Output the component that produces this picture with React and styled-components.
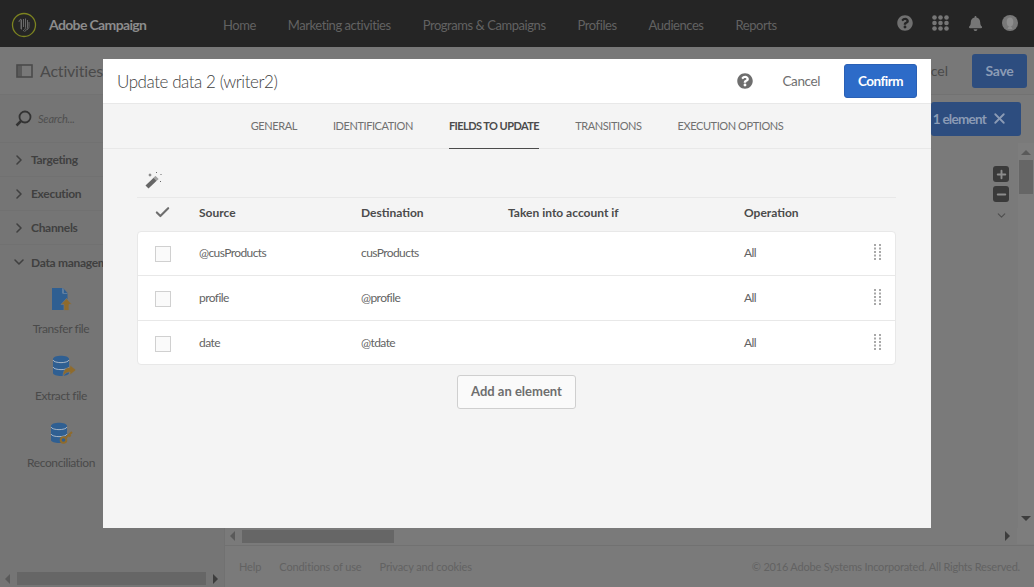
import React from 'react';
import styled, { createGlobalStyle } from 'styled-components';
import { ChevronRight, ChevronDown, Check, X, Plus, Minus } from 'lucide-react';
import { FaQuestionCircle, FaBell } from 'react-icons/fa';

const Global = createGlobalStyle`
  html, body { margin: 0; padding: 0; height: 100%; overflow: hidden; }
  body { font-family: Lato, "Open Sans", "Liberation Sans", sans-serif; background: #7a7a7a; }
  * { box-sizing: border-box; }
`;

const Page = styled.div`
  position: relative; width: 1034px; height: 587px; overflow: hidden;
  display: flex; flex-direction: column; background: #7a7a7a;
`;
const TopBar = styled.header`
  height: 47px; background: #252525; display: flex; align-items: center; padding: 2px 0 0 11px; flex: none;
`;
const Brand = styled.div`
  width: 212px; display: flex; align-items: center; gap: 12px; color: #8c8c8c; font-size: 14px; font-weight: 700; letter-spacing: -.65px;
`;
const Nav = styled.nav`
  display: flex; flex: 1; gap: 32px; color: #626262; font-size: 13px;
`;
const NavItem = styled.span`letter-spacing: -.45px;`;
const TopIcons = styled.div`
  display: flex; align-items: center; gap: 19px; color: #767676; padding-right: 16px; margin-top: -3px;
`;
const SubBar = styled.div`
  height: 48px; flex: none; display: flex; align-items: center; padding: 0 7px 0 16px; gap: 8px; background: #787878; border-bottom: 1px solid #727272;
`;
const SubTitle = styled.div`
  flex: 1; color: #4a4a4a; font-size: 16px; display: flex; align-items: center; gap: 7px; letter-spacing: -.2px;
`;
const SubCancel = styled.span`color: #4a4a4a; font-size: 14px; margin-right: 16px;`;
const SaveButton = styled.div`
  width: 55px; height: 34px; border-radius: 3px; background: #2d4d7f; color: #8b9bb5; font-size: 14px; font-weight: 700;
  display: flex; align-items: center; justify-content: center; letter-spacing: -.3px;
`;
const Main = styled.div`flex: 1; display: flex; min-height: 0;`;
const Sidebar = styled.aside`
  width: 225px; flex: none; background: #757575; display: flex; flex-direction: column; border-right: 1px solid #717171; overflow: hidden;
`;
const SearchRow = styled.div`
  height: 48px; display: flex; align-items: center; gap: 6px; padding-left: 15px; color: #4f4f4f; font-size: 11px; font-style: italic; border-bottom: 1px solid #717171; flex: none; letter-spacing: -.2px;
`;
const Group = styled.div`
  height: 34px; flex: none; display: flex; align-items: center; gap: 4px; padding-left: 11px; color: #404040; font-size: 12px; font-weight: 700; white-space: nowrap; letter-spacing: -.3px;
  border-bottom: ${p => (p.$open ? 'none' : '1px solid #717171')};
`;
const Tool = styled.div`
  height: 67px; flex: none; width: 122px; display: flex; flex-direction: column; align-items: center; gap: 10px; color: #4a4a4a; font-size: 12px; padding-top: 8px; letter-spacing: -.4px;
`;
const ToolIcon = styled.div`
  height: 24px; display: flex; align-items: center; justify-content: center; flex: none; margin-left: ${p => p.$dx || 0}px;
`;
const SideSpacer = styled.div`flex: 1;`;
const HScroll = styled.div`
  height: 13px; margin: 0 0 2px; display: flex; align-items: center; flex: none; padding-left: 5px; gap: 7px;
`;
const ScrollThumb = styled.div`
  height: 13px; width: ${p => p.$w}px; background: #666; flex: none;
`;
const ArrowLeft = styled.div`width:0;height:0;border:solid transparent;border-width:5px 5px 5px 0;border-right-color:#5a5a5a;flex:none;`;
const ArrowRight = styled.div`width:0;height:0;border:solid transparent;border-width:5px 0 5px 5px;border-left-color:#3d3d3d;flex:none;`;
const Content = styled.div`flex: 1; display: flex; flex-direction: column; min-width: 0;`;
const ContentTop = styled.div`flex: 1; display: flex; min-height: 0;`;
const Canvas = styled.div`flex: 1; display: flex; flex-direction: column; align-items: flex-end; padding: 7px 0 0;`;
const Chip = styled.div`
  width: 90px; height: 34px; border-radius: 3px; background: #2d4d7f; color: #8b9bb5; font-size: 13.5px; font-weight: 700; margin-right: -3px; padding-bottom: 1px;
  display: flex; align-items: center; justify-content: flex-end; gap: 5px; padding-right: 13px; white-space: nowrap; letter-spacing: -.75px;
`;
const ZoomBox = styled.div`
  display: flex; flex-direction: column; align-items: center; margin: 30px 9px 0 0; gap: 4px; width: 16px;
`;
const ZoomBtn = styled.div`
  width: 16px; height: 16px; border-radius: 3px; background: #3a3a3a; color: #8c8c8c; display: flex; align-items: center; justify-content: center;
`;
const ZoomMore = styled.div`display: flex; color: #4f4f4f; margin-top: 3px;`;
const VScroll = styled.div`
  width: 16px; flex: none; background: #7d7d7d; display: flex; flex-direction: column; align-items: center; padding-top: 7px; margin-top: 48px;
`;
const UpArrow = styled.div`width:0;height:0;border:solid transparent;border-width:0 5px 5px 5px;border-bottom-color:#5a5a5a;flex:none;`;
const DownArrow = styled.div`width:0;height:0;border:solid transparent;border-width:5px 5px 0 5px;border-top-color:#3d3d3d;flex:none;margin-top:auto;margin-bottom:8px;`;
const VThumb = styled.div`width: 14px; height: 34px; background: #666; margin-top: 5px; flex: none;`;
const CanvasScroll = styled.div`
  height: 17px; flex: none; display: flex; align-items: center; gap: 7px; padding: 1px 0 3px 5px; border-bottom: 1px solid #717171;
`;
const RightEnd = styled.div`margin-left: auto; display: flex; align-items: center; gap: 7px;`;
const CornerBox = styled.div`width: 17px; height: 16px; background: #7d7d7d;`;
const Footer = styled.footer`
  height: 41px; flex: none; display: flex; align-items: center; gap: 18px; padding: 0 14px; color: #626262; font-size: 11px; letter-spacing: -.12px;
`;
const FooterCopy = styled.span`margin-left: auto; letter-spacing: -.2px;`;

const Modal = styled.section`
  position: absolute; left: 103px; top: 59px; width: 828px; height: 469px; background: #f4f4f4; display: flex; flex-direction: column;
`;
const ModalHead = styled.div`
  height: 45px; flex: none; background: #fff; border-bottom: 1px solid #e8e8e8; display: flex; align-items: center; padding: 0 14px;
`;
const ModalTitle = styled.h2`
  margin: 0; flex: 1; font-size: 17px; font-weight: 300; color: #3f3f3f; letter-spacing: -.45px;
`;
const HelpIcon = styled.span`color: #6e6e6e; display: flex; margin-right: 30px;`;
const CancelLink = styled.span`color: #707070; font-size: 13.5px; margin-right: 24px; letter-spacing: -.4px; padding-bottom: 1px;`;
const Confirm = styled.button`
  width: 73px; height: 34px; border: 1px solid #2a60b5; border-radius: 3px; background: #2d6bc8; color: #fff; font: 700 13.5px Lato, sans-serif; padding: 0; letter-spacing: -.5px;
`;
const Tabs = styled.div`
  height: 45px; flex: none; display: flex; justify-content: center; gap: 36px; border-bottom: 1px solid #e8e8e8;
`;
const Tab = styled.div`
  display: flex; align-items: center; font-size: 11px; color: ${p => (p.$active ? '#4b4b4b' : '#707070')}; font-weight: ${p => (p.$active ? 700 : 400)};
  border-bottom: ${p => (p.$active ? '1px solid #4b4b4b' : '1px solid transparent')}; margin-bottom: -1px; padding-bottom: 1px; letter-spacing: ${p => (p.$active ? '-.55px' : '-.42px')};
`;
const Body = styled.div`flex: 1; padding: 0 35px 0 34px; display: flex; flex-direction: column;`;
const WandRow = styled.div`height: 49px; flex: none; border-bottom: 1px solid #e8e8e8; display: flex; align-items: center; padding: 14px 0 0 8px;`;
const Grid = `display: grid; grid-template-columns: 62px 162px 147px 236px 1fr; align-items: center;`;
const HeadRow = styled.div`
  ${Grid} height: 33px; flex: none; padding-bottom: 5px; font-size: 12px; font-weight: 700; color: #4b4b4b;
`;
const CheckCell = styled.div`display: flex; padding-left: 17px; color: #6e6e6e; margin-top: ${p => p.$mt || 0}px;`;
const Card = styled.div`
  background: #fff; border: 1px solid #e8e8e8; border-radius: 4px; flex: none;
`;
const Row = styled.div`
  ${Grid} height: ${p => p.$h}px; font-size: 12px; color: #636363; letter-spacing: -.58px;
  border-bottom: ${p => (p.$last ? '0' : '1px solid #e8e8e8')};
`;
const Cell = styled.span`padding-bottom: ${p => p.$pb}px; margin-left: -1px;`;
const Box = styled.div`width: 16px; height: 16px; border: 1px solid #d0d0d0; background: #fafafa;`;
const OpCell = styled.div`display: flex; align-items: center; justify-content: space-between; padding: 0 14px ${p => p.$pb}px 0; margin-left: -1px;`;
const AddWrap = styled.div`display: flex; justify-content: center; padding-top: 10px;`;
const AddBtn = styled.button`
  width: 119px; height: 34px; background: #fafafa; border: 1px solid #cfcfcf; border-radius: 3px; color: #6e6e6e; font: 700 13px Lato, sans-serif; padding: 0 0 2px;
`;

const Logo = () => (
  <svg width="26" height="26" viewBox="0 0 26 26" fill="none">
    <circle cx="13" cy="13" r="11.5" stroke="#7d8420" strokeWidth="1.3" />
    <path d="M8 10c0-1.500 1-2.500 2-3v10M10.500 8v9.500M12.500 7v8M14.500 6.500v9c0 1.500-1 2.500-2.500 3.500M16.500 8v7c0 2-1 3.500-3 4.500M18 10v4.500c0 1.500-1 2.500-2 3.500" stroke="#717171" strokeWidth=".9" />
  </svg>
);
const Dots = () => (
  <svg width="17" height="16" viewBox="0 0 17 16" fill="currentColor">
    {[2.5, 8, 13.5].map(y => [2.5, 8.5, 14.5].map(x => <circle key={x + '-' + y} cx={x} cy={y} r="2.3" />))}
  </svg>
);
const UserIcon = () => (
  <svg width="16" height="16" viewBox="0 0 16 16">
    <circle cx="8" cy="8" r="8" fill="#787878" />
    <ellipse cx="8" cy="7" rx="3.300" ry="4.500" fill="#8e8e8e" />
    <path d="M5.500 14c.8-2 1.500-3 2.500-3s1.700 1 2.500 3z" fill="#8e8e8e" />
  </svg>
);
const PanelIcon = () => (
  <svg width="17" height="14" viewBox="0 0 17 14" fill="none">
    <rect x="1" y="1" width="15" height="12" stroke="#4a4a4a" strokeWidth="1.600" />
    <rect x="1" y="1" width="5" height="12" fill="#4a4a4a" opacity=".65" />
  </svg>
);
const SearchIcon = () => (
  <svg width="17" height="17" viewBox="0 0 17 17" fill="none" stroke="#333" strokeWidth="1.800">
    <circle cx="10" cy="7" r="5.500" />
    <path d="M6 11l-4.500 4.500" strokeWidth="2.500" />
  </svg>
);
const Wand = () => (
  <svg width="18" height="18" viewBox="0 0 18 18">
    <path d="M0.500 14.500L10.500 5l3 3L3.500 17.500z" fill="#666" />
    <path d="M8.500 7l2-2 3 3-2 2z" fill="#fff" opacity=".4" />
    <path d="M5 2l.6 1.500L7 4l-1.400.6L5 6l-.6-1.400L3 4l1.400-.5zM11 1h1v1h-1zM15 10h1v1h-1zM15.500 3h1v1h-1z" fill="#666" />
  </svg>
);
const Grip = () => (
  <svg width="7" height="17" viewBox="0 0 7 17" fill="#a8a8a8">
    {[0, 3.5, 7, 10.5, 14].map(y => [0, 5].map(x => <rect key={x + '-' + y} x={x} y={y} width="2" height="2" />))}
  </svg>
);
const FileUp = () => (
  <svg width="22" height="24" viewBox="0 0 22 24">
    <path d="M1 1h10.500l5 5.500V23H1z" fill="#2f5f92" />
    <path d="M11.500 1l5 5.500h-5z" fill="#8e9bab" />
    <path d="M12.500 1.500l4 4.500h-4z" fill="#2f5f92" />
    <path d="M15.500 11.500l5.500 6h-3V23.500h-5V17.500h-3z" fill="#8f6b2c" stroke="#757575" strokeWidth=".8" />
  </svg>
);
const DbBase = ({ children }) => (
  <svg width="24" height="22" viewBox="0 0 24 22">
    <path d="M1 4c0-4.500 16-4.500 16 0v14c0 4-16 4-16 0z" fill="#2f5f92" />
    <path d="M1 5c1 3.500 15 3.500 16 0M1 12c1 3.500 15 3.500 16 0" fill="none" stroke="#b3bdc9" strokeWidth=".9" />
    {children}
  </svg>
);
const DbArrow = () => (
  <DbBase>
    <path d="M11 21c0-6 3-8.500 7-8.500V10l6 5-6 5v-3c-3 0-5 1.500-7 4z" fill="#8f6b2c" stroke="#757575" strokeWidth=".6" />
  </DbBase>
);
const DbKey = () => (
  <DbBase>
    <circle cx="13.500" cy="18" r="2.800" fill="none" stroke="#8f6b2c" strokeWidth="2" />
    <path d="M15.500 16l6.500-6M19 13l1.500 1.500" stroke="#8f6b2c" strokeWidth="2.200" />
  </DbBase>
);

const rows = [
  { a: '@cusProducts', b: 'cusProducts', h: 44, mt: 1, pb: 2 },
  { a: 'profile', b: '@profile', h: 45, mt: 2, pb: 2 },
  { a: 'date', b: '@tdate', h: 43, mt: 2, pb: 0 },
];

export default function App() {
  return (
    <Page>
      <Global />
      <TopBar>
        <Brand><Logo />Adobe Campaign</Brand>
        <Nav>
          <NavItem>Home</NavItem>
          <NavItem>Marketing activities</NavItem>
          <NavItem>Programs &amp; Campaigns</NavItem>
          <NavItem>Profiles</NavItem>
          <NavItem>Audiences</NavItem>
          <NavItem>Reports</NavItem>
        </Nav>
        <TopIcons>
          <FaQuestionCircle size={16} color="#707070" />
          <Dots />
          <FaBell size={15} />
          <UserIcon />
        </TopIcons>
      </TopBar>
      <SubBar>
        <SubTitle><PanelIcon />Activities</SubTitle>
        <SubCancel>Cancel</SubCancel>
        <SaveButton>Save</SaveButton>
      </SubBar>
      <Main>
        <Sidebar>
          <SearchRow><SearchIcon />Search...</SearchRow>
          <Group><ChevronRight size={16} strokeWidth={2.4} />Targeting</Group>
          <Group><ChevronRight size={16} strokeWidth={2.4} />Execution</Group>
          <Group><ChevronRight size={16} strokeWidth={2.4} />Channels</Group>
          <Group $open><ChevronDown size={16} strokeWidth={2.4} />Data management</Group>
          <Tool><ToolIcon $dx={2}><FileUp /></ToolIcon>Transfer file</Tool>
          <Tool><ToolIcon $dx={6}><DbArrow /></ToolIcon>Extract file</Tool>
          <Tool><ToolIcon $dx={2}><DbKey /></ToolIcon>Reconciliation</Tool>
          <SideSpacer />
          <HScroll>
            <ArrowLeft />
            <ScrollThumb $w={189} />
            <ArrowRight />
          </HScroll>
        </Sidebar>
        <Content>
          <ContentTop>
            <Canvas>
              <Chip>1 element <X size={17} strokeWidth={2.6} /></Chip>
              <ZoomBox>
                <ZoomBtn><Plus size={13} strokeWidth={3.5} /></ZoomBtn>
                <ZoomBtn><Minus size={13} strokeWidth={3.5} /></ZoomBtn>
                <ZoomMore><ChevronDown size={13} /></ZoomMore>
              </ZoomBox>
            </Canvas>
            <VScroll>
              <UpArrow />
              <VThumb />
              <DownArrow />
            </VScroll>
          </ContentTop>
          <CanvasScroll>
            <ArrowLeft />
            <ScrollThumb $w={152} />
            <RightEnd><ArrowRight /><CornerBox /></RightEnd>
          </CanvasScroll>
          <Footer>
            <span>Help</span>
            <span>Conditions of use</span>
            <span>Privacy and cookies</span>
            <FooterCopy>© 2016 Adobe Systems Incorporated. All Rights Reserved.</FooterCopy>
          </Footer>
        </Content>
      </Main>
      <Modal>
        <ModalHead>
          <ModalTitle>Update data 2 (writer2)</ModalTitle>
          <HelpIcon><FaQuestionCircle size={16} /></HelpIcon>
          <CancelLink>Cancel</CancelLink>
          <Confirm>Confirm</Confirm>
        </ModalHead>
        <Tabs>
          <Tab>GENERAL</Tab>
          <Tab>IDENTIFICATION</Tab>
          <Tab $active>FIELDS TO UPDATE</Tab>
          <Tab>TRANSITIONS</Tab>
          <Tab>EXECUTION OPTIONS</Tab>
        </Tabs>
        <Body>
          <WandRow><Wand /></WandRow>
          <HeadRow>
            <CheckCell><Check size={17} strokeWidth={3} /></CheckCell>
            <span>Source</span>
            <span>Destination</span>
            <span>Taken into account if</span>
            <span>Operation</span>
          </HeadRow>
          <Card>
            {rows.map((r, i) => (
              <Row key={r.a} $h={r.h} $last={i === rows.length - 1}>
                <CheckCell $mt={r.mt}><Box /></CheckCell>
                <Cell $pb={r.pb}>{r.a}</Cell>
                <Cell $pb={r.pb}>{r.b}</Cell>
                <Cell $pb={r.pb} />
                <OpCell $pb={r.pb}>All<Grip /></OpCell>
              </Row>
            ))}
          </Card>
          <AddWrap><AddBtn>Add an element</AddBtn></AddWrap>
        </Body>
      </Modal>
    </Page>
  );
}
